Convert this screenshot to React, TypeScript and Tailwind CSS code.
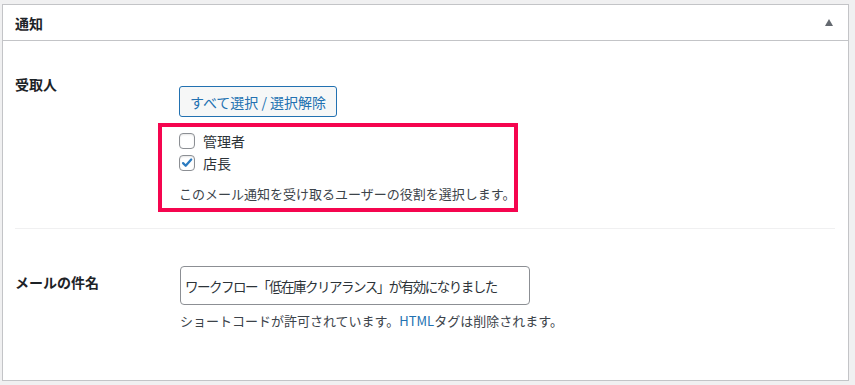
import React from 'react';

const jp = "font-['Noto_Sans_CJK_JP','Noto_Sans',sans-serif]";

function Checkbox({ checked }: { checked?: boolean }) {
  return (
    <span className="relative inline-flex h-[16px] w-[16px] shrink-0 items-center justify-center rounded-[4px] border border-[#8c8f94] bg-white shadow-[inset_0_1px_2px_rgba(0,0,0,0.1)]">
      {checked && (
        <svg viewBox="0 0 16 16" className="h-[14px] w-[14px]">
          <path d="M3.5 8.2l3 3L12.8 4" fill="none" stroke="#2b7bc0" strokeWidth="2.6" strokeLinecap="round" strokeLinejoin="round" />
        </svg>
      )}
    </span>
  );
}

export default function App() {
  return (
    <div className={`h-[385px] w-[855px] bg-[#f0f0f1] pl-[2px] pt-[4px] ${jp}`}>
      <div className="h-[377px] w-[847px] border border-[#c3c4c7] bg-white">
        {/* Header */}
        <div className="flex h-[36px] items-center justify-between border-b border-[#c3c4c7] pl-[12px] pr-[15px]">
          <h2 className="text-[14px] font-bold leading-none text-[#1d2327]">通知</h2>
          <svg viewBox="0 0 8 7" className="h-[7px] w-[8px]">
            <polygon points="4,0 8,7 0,7" fill="#646970" />
          </svg>
        </div>

        {/* 受取人 */}
        <div className="flex">
          <div className="w-[176px] shrink-0 pl-[12px] pt-[33px] text-[14px] font-bold leading-[20px] text-[#1d2327]">
            受取人
          </div>
          <div className="relative pt-[45px]">
            <button className="flex h-[31px] w-[158px] items-center justify-center rounded-[3px] border border-[#2271b1] bg-[#f6f7f7] text-[14px] leading-none text-[#2271b1]">
              すべて選択 / 選択解除
            </button>
            <div className="mt-[16px] flex flex-col gap-[6px]">
              <label className="flex items-center gap-[8px] text-[14px] leading-[16px] text-[#2c3338]">
                <Checkbox />
                管理者
              </label>
              <label className="flex items-center gap-[8px] text-[14px] leading-[16px] text-[#2c3338]">
                <Checkbox checked />
                店長
              </label>
            </div>
            <p className="mt-[13px] text-[13px] leading-[20px] text-[#3c434a]">
              このメール通知を受け取るユーザーの役割を選択します。
            </p>
            {/* highlight annotation */}
            <div className="pointer-events-none absolute left-[-21px] top-[82px] h-[89px] w-[360px] border-[4px] border-[#f5054f]" />
          </div>
        </div>

        <div className="ml-[12px] mr-[13px] mt-[24px] h-px bg-[#f0f0f1]" />

        {/* メールの件名 */}
        <div className="flex">
          <div className="w-[177px] shrink-0 pl-[12px] pt-[43px] text-[14px] font-bold leading-[20px] text-[#1d2327]">
            メールの件名
          </div>
          <div className="pt-[37px]">
            <input
              readOnly
              value="ワークフロー「低在庫クリアランス」が有効になりました"
              className={`h-[39px] w-[350px] rounded-[4px] border border-[#8c8f94] bg-white px-[4px] text-[13.5px] tracking-[-1.5px] text-[#2c3338] outline-none ${jp}`}
            />
            <p className="mt-[6px] text-[13px] leading-[20px] text-[#3c434a]">
              ショートコードが許可されています。<span className="text-[#2271b1]">HTML</span>タグは削除されます。
            </p>
          </div>
        </div>
      </div>
    </div>
  );
}
